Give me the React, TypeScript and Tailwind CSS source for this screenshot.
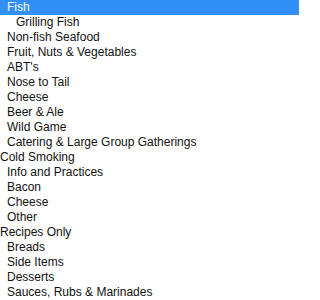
import React from 'react';

type Option = { label: string; level: number; selected?: boolean };

const options: Option[] = [
    { label: 'Fish', level: 1, selected: true },
    { label: 'Grilling Fish', level: 2 },
    { label: 'Non-fish Seafood', level: 1 },
    { label: 'Fruit, Nuts & Vegetables', level: 1 },
    { label: "ABT's", level: 1 },
    { label: 'Nose to Tail', level: 1 },
    { label: 'Cheese', level: 1 },
    { label: 'Beer & Ale', level: 1 },
    { label: 'Wild Game', level: 1 },
    { label: 'Catering & Large Group Gatherings', level: 1 },
    { label: 'Cold Smoking', level: 0 },
    { label: 'Info and Practices', level: 1 },
    { label: 'Bacon', level: 1 },
    { label: 'Cheese', level: 1 },
    { label: 'Other', level: 1 },
    { label: 'Recipes Only', level: 0 },
    { label: 'Breads', level: 1 },
    { label: 'Side Items', level: 1 },
    { label: 'Desserts', level: 1 },
    { label: 'Sauces, Rubs & Marinades', level: 1 },
];

const indent = ['pl-0', 'pl-[7px]', 'pl-[16px]'];

export default function App() {
    return (
        <div className="w-[300px] h-[300px] overflow-hidden bg-white font-['Liberation_Sans',Arial,sans-serif] text-[12px] leading-[15px] text-[#111]">
            <ul className="flex flex-col">
                {options.map((opt, idx) => (
                    <li
                        key={idx}
                        className={`h-[15px] whitespace-nowrap ${indent[opt.level]} ${opt.selected ? 'bg-[#3090f8] text-white mr-[1px]' : ''}`}
                    >
                        {opt.label}
                    </li>
                ))}
            </ul>
        </div>
    );
}
